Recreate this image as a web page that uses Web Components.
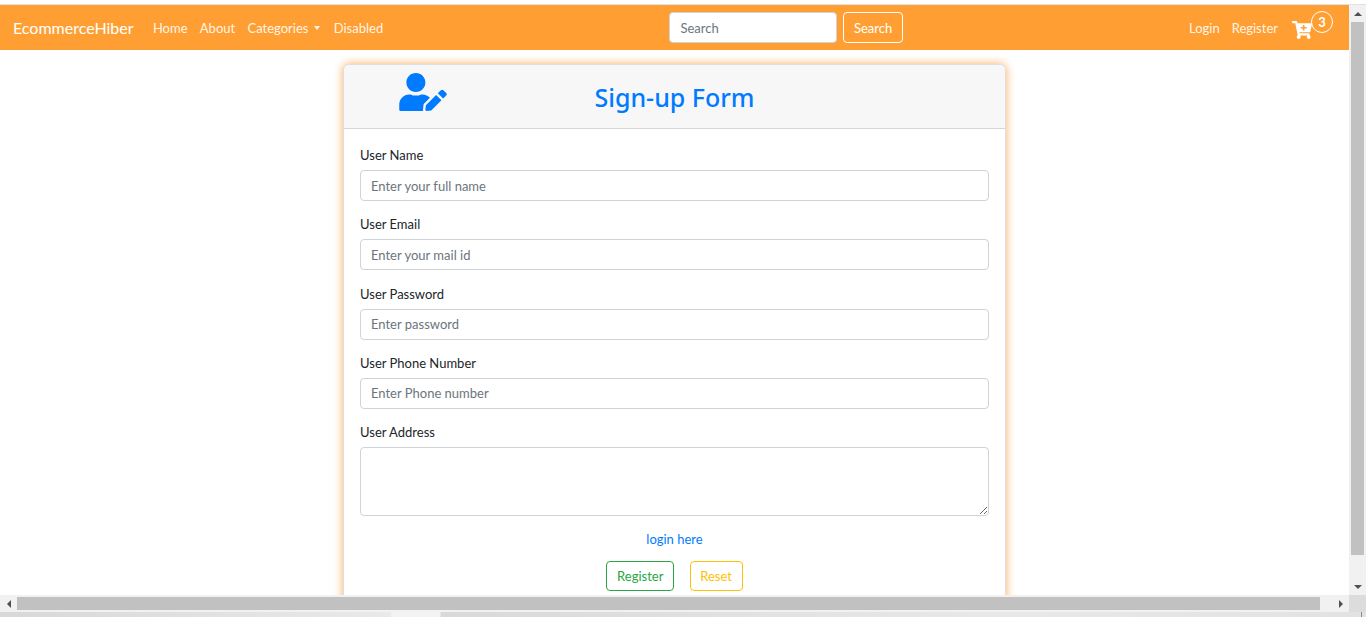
<!DOCTYPE html>
<html lang="en">
<head>
<meta charset="utf-8">
<title>EcommerceHiber</title>
<style>
  html, body { margin: 0; height: 100%; overflow: hidden; }
  body { font-family: Lato, "Noto Sans", sans-serif; background: #fff; }
</style>
</head>
<body>
<app-window>
  <shop-navbar slot="nav"></shop-navbar>
  <signup-card></signup-card>
</app-window>

<script>
const FIELD_CSS = `
  input, textarea {
    box-sizing: border-box; display: block; width: 100%; margin: 0;
    border: 1px solid #ced4da; border-radius: 4px; background: #fff;
    font: inherit; color: #495057; padding: 6px 10px; outline: none;
  }
  input::placeholder { color: #6c757d; opacity: 1; }
`;

class AppWindow extends HTMLElement {
  connectedCallback() {
    this.attachShadow({ mode: 'open' });
    this.shadowRoot.innerHTML = `
      <style>
        :host { display: grid; grid-template-columns: 1fr 17px; grid-template-rows: 5px 1fr 17px 5px; width: 1366px; height: 617px; overflow: hidden; }
        .top { grid-column: 1 / 3; background: #dee2e6; border-top: 4px solid #fff; box-sizing: border-box; }
        .view { overflow: hidden; min-width: 0; min-height: 0; }
        .strip { grid-column: 1 / 3; background: linear-gradient(90deg, #d8d8d8 0, #e9e9e9 390px, #f3f3f3 392px, #f3f3f3 440px, #d9d9d9 441px, #e8e8e8 1000px, #e2e2e2 1361px, #8a8a8a 1361px, #8a8a8a 1362px, #e2e2e2 1362px); }
        .corner { background: #dcdcdc; }
      </style>
      <div class="top"></div>
      <div class="view"><slot name="nav"></slot><slot></slot></div>
      <win-scrollbar dir="v"></win-scrollbar>
      <win-scrollbar dir="h"></win-scrollbar>
      <div class="corner"></div>
      <div class="strip"></div>
    `;
  }
}

class WinScrollbar extends HTMLElement {
  connectedCallback() {
    this.attachShadow({ mode: 'open' });
    const v = this.getAttribute('dir') === 'v';
    this.shadowRoot.innerHTML = `
      <style>
        :host { display: flex; flex-direction: ${v ? 'column' : 'row'}; background: #f1f1f1; ${v ? '' : 'padding: 2px 0;box-sizing:border-box;'} }
        .btn { flex: none; ${v ? 'height: 17px' : 'width: 17px'}; display: flex; align-items: center; justify-content: center; }
        .thumb { flex: 1; background: #c1c1c1; ${v ? 'margin: 0 2px 23px 2px' : 'margin-right: 12px'}; }
        svg { display: block; fill: #505050; }
      </style>
      <div class="btn"><svg width="8" height="8" viewBox="0 0 8 8"><path d="${v ? 'M4 2 L8 6 H0 Z' : 'M2 4 L6 0 V8 Z'}"/></svg></div>
      <div class="thumb"></div>
      <div class="btn"><svg width="8" height="8" viewBox="0 0 8 8"><path d="${v ? 'M0 2 H8 L4 6 Z' : 'M2 0 L6 4 L2 8 Z'}"/></svg></div>
    `;
  }
}

class NavLink extends HTMLElement {
  connectedCallback() {
    this.attachShadow({ mode: 'open' });
    this.shadowRoot.innerHTML = `
      <style>
        :host { display: inline-flex; align-items: center; color: rgba(255,255,255,.9); font-size: 13px; white-space: nowrap; cursor: pointer; }
        :host([caret])::after { content: ""; margin: 1px 1.5px 0 5.5px; border-top: 4px solid; border-left: 3px solid transparent; border-right: 3px solid transparent; }
      </style>
      <slot></slot>
    `;
  }
}

class ShopNavbar extends HTMLElement {
  connectedCallback() {
    this.attachShadow({ mode: 'open' });
    this.shadowRoot.innerHTML = `
      <style>
        ${FIELD_CSS}
        :host { display: flex; align-items: center; height: 45px; padding: 0 16px 0 13px; background: #ff9f33; color: #fff; font-size: 13px; }
        .left { display: flex; align-items: center; gap: 12.3px; }
        .right { display: flex; align-items: center; gap: 12px; }
        .brand { font-size: 16px; margin-right: 7px; white-space: nowrap; }
        form { display: flex; gap: 6px; margin: 0 auto; }
        input { width: 168px; height: 31px; }
        button { height: 31px; padding: 0 9.5px; background: transparent; color: #fff; font: inherit; border: 1px solid #fff; border-radius: 4px; }
        .cart { position: relative; width: 41px; height: 20px; margin-left: 2px; }
        .cart svg { display: block; width: 20px; height: 18px; fill: #fff; position: absolute; left: 0; top: 3px; }
        .badge { position: absolute; left: 19px; top: -7px; width: 22px; height: 22px; box-sizing: border-box; border: 1px solid #fff; border-radius: 50%; font-size: 13px; font-weight: 700; display: flex; align-items: center; justify-content: center; }
      </style>
      <div class="left">
        <span class="brand">EcommerceHiber</span>
        <nav-link>Home</nav-link>
        <nav-link>About</nav-link>
        <nav-link caret>Categories</nav-link>
        <nav-link>Disabled</nav-link>
      </div>
      <form onsubmit="return false">
        <input type="text" placeholder="Search">
        <button type="button">Search</button>
      </form>
      <div class="right">
        <nav-link>Login</nav-link>
        <nav-link>Register</nav-link>
        <div class="cart">
          <svg viewBox="0 0 576 512"><path d="M504.717 320H211.572l6.545 32h268.418c15.401 0 26.816 14.301 23.403 29.319l-5.517 24.276C523.112 414.668 536 433.828 536 456c0 31.202-25.519 56.444-56.824 55.994-29.823-.429-54.35-24.631-55.155-54.447-.44-16.287 6.085-31.049 16.803-41.548H231.176C241.553 426.165 248 440.326 248 456c0 31.813-26.528 57.431-58.67 55.938-28.54-1.325-51.751-24.385-53.251-52.917-1.158-22.034 10.436-41.455 28.051-51.586L93.883 64H24C10.745 64 0 53.255 0 40V24C0 10.745 10.745 0 24 0h102.529c11.401 0 21.228 8.021 23.513 19.19L159.208 64H551.99c15.401 0 26.816 14.301 23.403 29.319l-47.273 208C525.637 312.246 515.923 320 504.717 320zM408 168h-48v-40c0-8.837-7.163-16-16-16h-16c-8.837 0-16 7.163-16 16v40h-48c-8.837 0-16 7.163-16 16v16c0 8.837 7.163 16 16 16h48v40c0 8.837 7.163 16 16 16h16c8.837 0 16-7.163 16-16v-40h48c8.837 0 16-7.163 16-16v-16c0-8.837-7.163-16-16-16z"/></svg>
          <span class="badge">3</span>
        </div>
      </div>
    `;
  }
}

class FormField extends HTMLElement {
  connectedCallback() {
    this.attachShadow({ mode: 'open' });
    const ph = this.getAttribute('placeholder') || '';
    const control = this.hasAttribute('multiline')
      ? '<textarea></textarea>'
      : `<input type="text" placeholder="${ph}">`;
    this.shadowRoot.innerHTML = `
      <style>
        ${FIELD_CSS}
        :host { display: block; margin-bottom: 14.25px; font-size: 13px; }
        label { display: block; height: 24px; line-height: 18px; color: #212529; }
        input { height: 31px; }
        textarea { height: 69px; resize: vertical; }
      </style>
      <label><slot></slot></label>
      ${control}
    `;
  }
}

class SignupCard extends HTMLElement {
  connectedCallback() {
    this.attachShadow({ mode: 'open' });
    this.shadowRoot.innerHTML = `
      <style>
        :host { display: block; box-sizing: border-box; width: 663px; margin: 14px 0 0 343px; background: #fff; border: 1px solid #dfdfdf; border-radius: 6px; box-shadow: 0 0 10px #ffab5c; color: #212529; font-size: 13px; }
        header { display: grid; grid-template-columns: 1fr auto 1fr; align-items: center; height: 64px; box-sizing: border-box; background: #f7f7f7; border-bottom: 1px solid #d6d6d6; border-radius: 6px 6px 0 0; }
        header svg { width: 48px; height: 38px; fill: #007bff; margin: -9px 0 0 55px; display: block; }
        h1 { margin: 0; font-family: "Noto Sans", sans-serif; font-size: 25px; font-weight: 500; color: #007bff; }
        .body { padding: 17px 16px 16px; }
        .login { text-align: center; margin: 15px 0 14px; }
        .login a { color: #007bff; text-decoration: none; }
        .actions { display: flex; justify-content: center; gap: 15.5px; }
        button { height: 30px; padding: 0 9.7px; background: #fff; font: inherit; border: 1px solid; border-radius: 4px; }
        .ok { color: #28a745; }
        .warn { color: #ffc107; }
      </style>
      <header>
        <svg viewBox="0 0 640 512"><path d="M224 256c70.7 0 128-57.3 128-128S294.7 0 224 0 96 57.3 96 128s57.3 128 128 128zm89.6 32h-16.7c-22.2 10.2-46.9 16-72.9 16s-50.6-5.8-72.9-16h-16.7C60.2 288 0 348.2 0 422.4V496c0 8.8 7.2 16 16 16h306.9c-2.4-6.8-3.4-14-2.6-21.3l6.8-60.9 1.2-11.1 7.9-7.9 77.3-77.3c-24.5-27.7-60-45.5-99.9-45.5zm45.3 145.3l-6.8 61c-1.1 10.2 7.5 18.8 17.6 17.6l60.9-6.8 137.9-137.9-71.7-71.7-137.9 137.8zM633 268.9L595.1 231c-9.3-9.3-24.5-9.3-33.8 0l-37.8 37.8-4.1 4.1 71.8 71.7 41.8-41.8c9.3-9.4 9.3-24.5 0-33.9z"/></svg>
        <h1>Sign-up Form</h1>
        <span></span>
      </header>
      <div class="body">
        <form-field placeholder="Enter your full name">User Name</form-field>
        <form-field placeholder="Enter your mail id">User Email</form-field>
        <form-field placeholder="Enter password">User Password</form-field>
        <form-field placeholder="Enter Phone number">User Phone Number</form-field>
        <form-field multiline>User Address</form-field>
        <p class="login"><a href="#">login here</a></p>
        <div class="actions">
          <button class="ok" type="button">Register</button>
          <button class="warn" type="button">Reset</button>
        </div>
      </div>
    `;
  }
}

customElements.define('win-scrollbar', WinScrollbar);
customElements.define('nav-link', NavLink);
customElements.define('shop-navbar', ShopNavbar);
customElements.define('form-field', FormField);
customElements.define('signup-card', SignupCard);
customElements.define('app-window', AppWindow);
</script>
</body>
</html>
